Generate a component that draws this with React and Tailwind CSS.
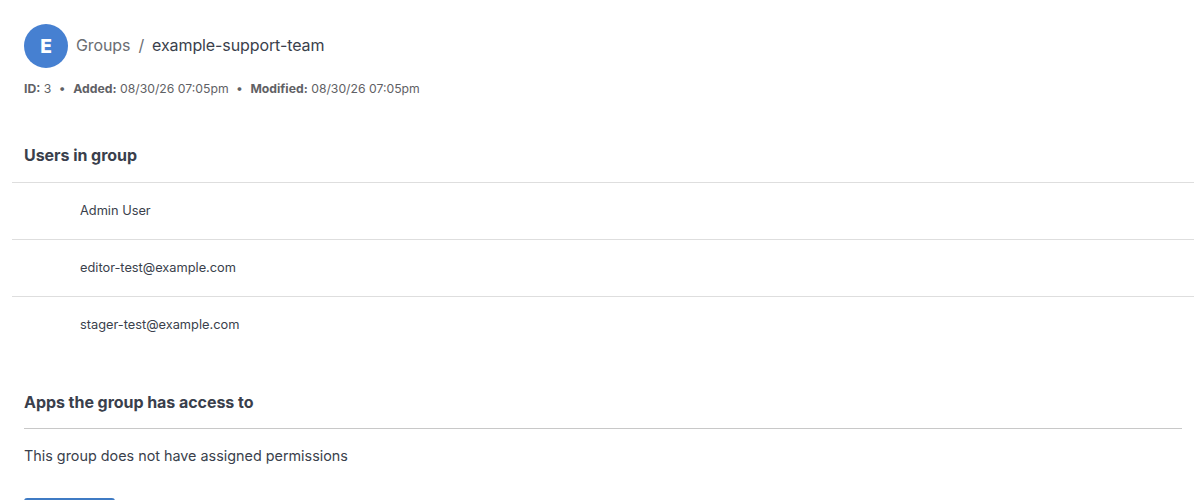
const USERS = ['Admin User', 'editor-test@example.com', 'stager-test@example.com'];

function MetaItem({ label, value }) {
  return (
    <span>
      <strong className="font-bold">{label}:</strong> {value}
    </span>
  );
}

function Header() {
  return (
    <header>
      <div className="flex h-11 items-center">
        <div className="flex h-11 w-11 items-center justify-center rounded-full bg-[#4680d1] text-[19.2px] font-extrabold text-white">
          E
        </div>
        <h1 className="ml-2 flex pb-0.5 text-base tracking-[-0.1px]">
          <a href="#groups" className="text-[#6b6e73]">Groups</a>
          <span className="mx-2 text-[#6b6e73]">/</span>
          <span className="text-[#3a3f4c]">example-support-team</span>
        </h1>
      </div>
      <div className="mt-3 flex text-[12.22px] leading-[18px] text-[#5f6165]">
        <MetaItem label="ID" value="3" />
        <span className="mx-[7.5px]">•</span>
        <MetaItem label="Added" value="08/30/26 07:05pm" />
        <span className="mx-[7.5px]">•</span>
        <MetaItem label="Modified" value="08/30/26 07:05pm" />
      </div>
    </header>
  );
}

export default function App() {
  return (
    <main className="h-[500px] overflow-hidden bg-white px-6 pt-6 font-['Inter',sans-serif] text-[#3a3f4c]">
      <Header />

      <section className="mt-[45px]">
        <h2 className="text-base leading-6 font-bold tracking-[-0.05px]">Users in group</h2>
        <ul className="-mr-[18px] -ml-3 mt-[15px]">
          {USERS.map((user) => (
            <li key={user} className="flex h-[57px] items-center border-t border-[#dedede] pl-[68px] text-[12.8px]">
              {user}
            </li>
          ))}
        </ul>
      </section>

      <section className="mt-[37px]">
        <h2 className="text-base leading-6 font-bold tracking-[-0.05px]">Apps the group has access to</h2>
        <div className="mt-[14px] mr-[-6px] border-t border-[#c8c8c8] pt-4">
          <p className="text-[14.37px] leading-[22px]">This group does not have assigned permissions</p>
        </div>
        <button className="mt-[31px] h-9 w-[91px] rounded-[3px] bg-[#3f7bc4]" aria-label="Edit group" />
      </section>
    </main>
  );
}
